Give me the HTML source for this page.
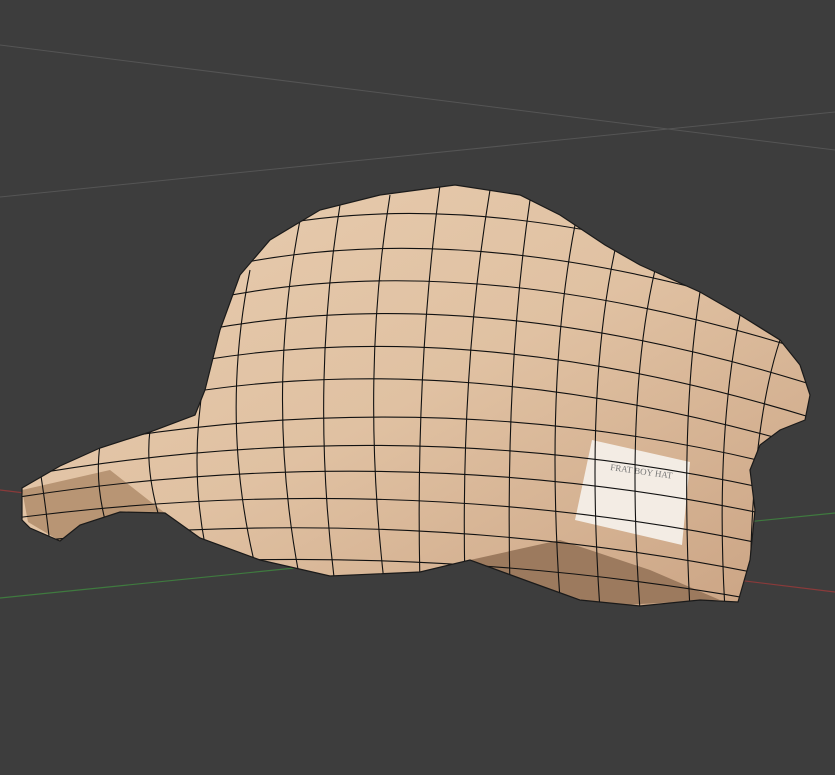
<!DOCTYPE html>
<html><head><meta charset="utf-8"><style>
html,body{margin:0;padding:0;background:#3d3d3d;width:835px;height:775px;overflow:hidden}
svg{display:block}
</style></head><body>
<svg width="835" height="775" viewBox="0 0 835 775" xmlns="http://www.w3.org/2000/svg">
<defs>
<linearGradient id="g" x1="0" y1="0" x2="1" y2="1">
<stop offset="0" stop-color="#e8cdb0"/><stop offset="0.5" stop-color="#e0c1a2"/><stop offset="1" stop-color="#caa383"/>
</linearGradient>
<clipPath id="cap"><path id="capp" d="M455,185 L520,195 L560,215 L605,245 L640,265 L700,292 L740,315 L780,340 L800,365 L810,395 L805,420 L780,430 L760,445 L750,470 L755,510 L750,560 L738,602 L700,600 L640,606 L580,600 L530,582 L470,560 L420,572 L330,576 L260,560 L200,538 L165,513 L120,512 L80,525 L60,541 L30,528 L22,520 L22,488 L60,466 L100,448 L150,432 L195,415 L205,390 L220,330 L240,275 L270,240 L320,210 L380,195 Z"/></clipPath>
</defs>
<rect width="835" height="775" fill="#3d3d3d"/>
<line x1="0" y1="45" x2="835" y2="150" stroke="#555" stroke-width="1"/>
<line x1="0" y1="197" x2="835" y2="112" stroke="#555" stroke-width="1"/>
<line x1="0" y1="490" x2="835" y2="592" stroke="#8a3a3a" stroke-width="1.2"/>
<line x1="0" y1="598" x2="835" y2="513" stroke="#3f7a3f" stroke-width="1.2"/>
<use href="#capp" fill="url(#g)"/>
<g clip-path="url(#cap)">
<path d="M22,490 L110,470 L165,513 L120,512 L60,541 L28,522 Z" fill="#b89574"/>
<path d="M470,560 L560,540 L650,570 L720,600 L600,606 L530,582 Z" fill="#9c7a5e"/>
<polygon points="592,440 690,462 682,545 575,520" fill="#f3ece4"/>
<text x="610" y="470" font-family="Liberation Serif, serif" font-size="9" fill="#777" transform="rotate(8 610 470)">FRAT BOY HAT</text>
<g fill="none" stroke="#111" stroke-width="1.1">
<path d="M150,260 Q430,150 835,300"/>
<path d="M140,290 Q430,190 835,330"/>
<path d="M130,320 Q430,225 835,360"/>
<path d="M120,350 Q430,260 835,392"/>
<path d="M110,380 Q430,295 835,425"/>
<path d="M100,410 Q430,330 835,455"/>
<path d="M0,460 Q430,365 835,480"/>
<path d="M0,480 Q430,400 835,505"/>
<path d="M0,500 Q430,430 835,530"/>
<path d="M0,520 Q430,462 835,560"/>
<path d="M0,545 Q430,495 835,590"/>
<path d="M0,575 Q430,530 835,615"/>
<path d="M0,610 Q430,565 835,640"/>
<path d="M40,470 Q45,500 50,545"/>
<path d="M100,445 Q95,480 105,520"/>
<path d="M150,430 Q145,470 160,520"/>
<path d="M215,330 Q185,440 205,545"/>
<path d="M250,270 Q220,420 255,565"/>
<path d="M300,220 Q265,400 300,580"/>
<path d="M340,205 Q310,390 335,585"/>
<path d="M390,195 Q360,380 385,590"/>
<path d="M440,185 Q415,370 420,585"/>
<path d="M490,190 Q460,370 465,585"/>
<path d="M530,200 Q505,370 510,590"/>
<path d="M575,225 Q545,380 560,600"/>
<path d="M615,250 Q585,390 600,610"/>
<path d="M655,270 Q625,400 640,610"/>
<path d="M700,292 Q680,420 690,610"/>
<path d="M740,315 Q715,440 725,610"/>
<path d="M780,340 Q750,430 750,610"/>
</g>
</g>
<use href="#capp" fill="none" stroke="#1a1a1a" stroke-width="1.2"/>
</svg>
</body></html>
